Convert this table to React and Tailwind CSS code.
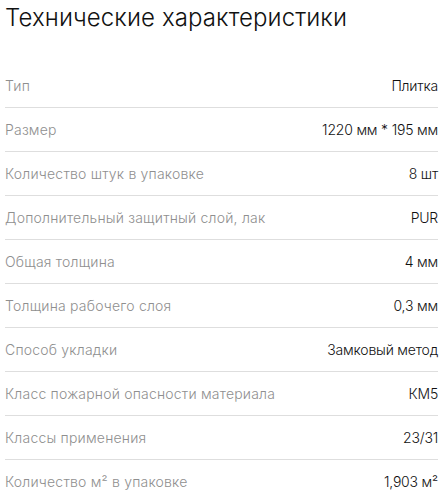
const specs = [
  ["Тип", "Плитка"],
  ["Размер", "1220 мм * 195 мм"],
  ["Количество штук в упаковке", "8 шт"],
  ["Дополнительный защитный слой, лак", "PUR"],
  ["Общая толщина", "4 мм"],
  ["Толщина рабочего слоя", "0,3 мм"],
  ["Способ укладки", "Замковый метод"],
  ["Класс пожарной опасности материала", "КМ5"],
  ["Классы применения", "23/31"],
  ["Количество м² в упаковке", "1,903 м²"],
];

export default function App() {
  return (
    <div className="bg-white min-h-screen pl-[5px] pr-[9px] font-['Inter',sans-serif]">
      <h2 className="h-[64px] pt-[2px] text-[24px] leading-[32px] text-[#111] font-light tracking-[0.1px]">
        Технические характеристики
      </h2>
      <div>
        {specs.map(([label, value], i) => (
          <div
            key={i}
            className="flex items-center justify-between h-[44px] border-b border-[#dedede] text-[14px] font-light"
          >
            <span className="text-[#8f8f8f] tracking-[0.2px]">{label}</span>
            <span className="text-[#111] tracking-[-0.2px]">{value}</span>
          </div>
        ))}
      </div>
    </div>
  );
}
